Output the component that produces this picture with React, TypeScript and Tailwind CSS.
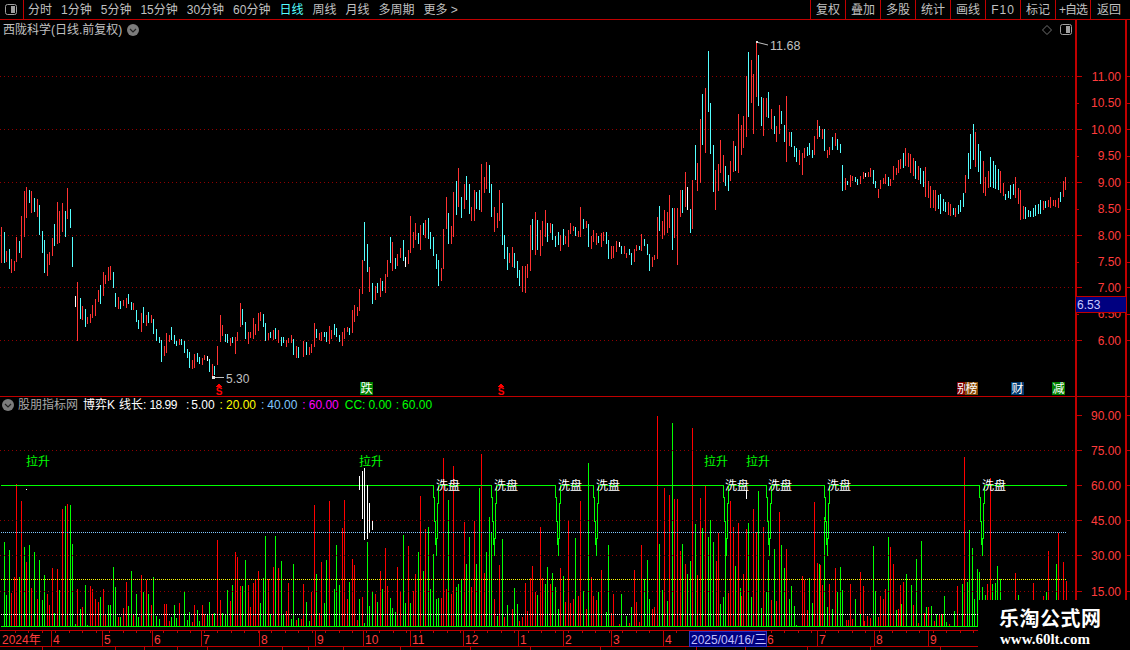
const FONT = "font-['Liberation_Sans','Noto_Sans_CJK_SC',sans-serif]";

const RED = "#ff3232";
const CYAN = "#54ffff";
const GREEN = "#00ff00";
const LINE_RED = "#c00000";
const GRID_RED = "#900000";

// candle tables, read off the chart: x + colour + top-bottom, in 1/3 px
const CANDLES_A = `3r171-278 12c186-278 18r243-275 27c237-297 33r267-308 42r273-303 48r201-275 57c213-248 63r138-264 72r63-201 78r51-144 87c60-99 93r63-129 102c84-126 111r87-141 117c105-195 126c183-249 132c210-309 141r252-318 148r246-285 157r204-258 163c162-228 172r96-222 178r123-219 187r99-186 196c123-201 202r54-147 211c117-174 217c201-291 226w378-411 232r336-513 241c384-447 247r408-450 256c417-471 262r441-462 271r432-459 277r405-444 286r387-438 295r360-396 301c345-402 310r306-378 316r315-342 325r291-333 331r288-330 340c306-354 346c369-411 355r381-417 361c393-417 370r390-408 379r384-414 385c372-402 394c396-420 400r399-421 409c420-456 415c450-477 424r429-486 430c411-459 439r435-468 445c426-459 454r435-459 460c447-492 469c477-513 478c501-519 484c510-576 493r528-558 499r489-549 508r495-516 514c471-510 523c495-522 529c513-528 538r507-525 544c507-525 553c513-549 562c537-564 568c546-594 577r570-597 583r552-594 592c549-576 598c561-582 607r564-585 613r555-570 622w558-573 628c567-606 637r582-624 643c588-615 652r528-585 661r435-516 667r465-498 676c492-516 682c492-519 691r504-528 697c501-519 706r501-552 712r486-513`;

const CANDLES_B = `0r460-530 7c477-525 16c517-567 25r545-582 31r545-565 40r505-567 46r522-555 55r490-543 61r487-513 70c492-530 76c520-573 85r550-570 91c545-565 100r540-570 106c535-567 115r540-580 124c562-587 130c562-580 139r570-590 145r565-580 154r555-580 160c567-615 169r588-625 175c592-625 190r573-620 199c577-615 208r590-615 214r582-610 223r520-590 229c537-565 238r550-570 244r545-572 253c545-562 259c547-577 268r528-582 274r540-567 283c522-555 289c535-562 298c555-577 307r545-587 313r533-567 322r531-547 328c534-555 337r480-550 343r465-516 352r470-498 358r417-483 367r330-432 373c216-332 382c282-366 388r351-426 397c400-462 406r408-450 412c400-430 421r383-441 427c393-423 436r372-430 442r330-380 451c261-340 457r276-363 466c325-357 472r312-348 481r294-325 490c270-332 496w320-352 505r300-342 511r197-310 520r245-293 526r220-270 535c250-282 541r225-300 550c220-255 556r210-265 565c205-267 571c247-297 580c262-318 589c312-357 595c330-408 604r355-393 610r237-357 619r140-237 625c190-282 634r228-282 640r126-260 649c94-195 655r55-170 664c142-204 673r102-177 679c78-150 688c102-192 694r170-212 703r120-212 709c126-177 718c120-180 724r42-186 733r82-130 739r37-118 748c45-130 754c102-201 763r170-246 772r190-235 778r121-212 787c159-285 793c255-327 802c292-360 808r310-340 817r292-352 823c310-355 832c333-384 838c360-408 847r348-426 856r348-429 862r342-384 871r225-363 877c207-300 886r186-315 892c210-300 901r240-318 907r213-288 916r180-262 922c219-276 931r219-250 937c222-270 946c258-291 955c246-285 961r255-303 970c237-285 976r258-282 985r240-291 991r219-252 1000r228-243 1006c231-258 1015r243-261 1021r171-261 1030c207-237 1039r213-234 1045c222-291 1054r258-297 1060r240-276 1069r249-285 1075c258-279 1084r249-291 1090r246-273 1099c246-282 1105c270-327 1114r288-327 1120r288-324 1129r273-306 1138w276-291 1144c288-312 1153r288-312 1159r309-324 1168c297-315 1174c309-345 1183r297-336 1189r285-303 1198c288-300 1204r252-303 1213c267-288 1222c282-315 1228c312-363 1237r321-351 1243r315-330 1252r201-327 1258c168-243`;

const CANDLES_C = `67r543-597 73r510-585 82r515-580 88r465-565 97c505-630 103r505-595 112r505-675 121r450-530 127c450-520 136r395-500 142w440-510 151c507-578 157r420-567 166c315-420 172r368-453 181r237-430 187c162-315 196r145-340 205c33-215 211c190-342 220c315-457 226r390-510 235r372-453 241r300-400 250r345-425 256c378-438 265c405-453 271r362-423 280r303-395 286c318-393 295r222-400 304r255-345 310r228-325 319r108-290 325c36-232 334r60-190 340r102-282 349r8-172 355c45-198 364c170-258 370r174-288 379r174-232 385c156-235 394r207-268 403c228-283 409r258-306 418r195-282 424c213-252 433c255-306 439r168-366 448r276-318 454c276-321 463c318-352 469c324-366 478r330-375 487r339-405 493r324-354 502c321-348 508c309-345 517c330-354 523r288-345 532r240-297 538c258-291 547r267-297 553c267-333 562r330-354 568r321-345 577c291-330 586r279-318 592c297-330 601c312-339 607c375-453 616r414-450 622c423-435 631r405-441 637r408-423 646c411-426 652c417-435 661r408-432 670r396-417 676w399-411 685r396-411 691r384-411 700c390-432 706c423-444 715r447-474 721r420-447 730r414-432 736r402-432 745c411-438 751r417-438 760r378-420 769r384-405 775r360-399`;

// right end of the price chart: x, top, bottom
const TAIL: [number, number, number][] = [
  [900, 152, 176], [905, 146, 168], [915, 160, 180], [925, 166, 198], [930, 186, 208], [945, 200, 214],
  [955, 206, 219], [962, 192, 214], [966, 160, 195], [968, 136, 188], [972, 113, 168], [976, 135, 170], [980, 150, 185],
  [985, 175, 198], [990, 156, 188], [1000, 170, 194], [1005, 190, 204], [1015, 172, 203],
  [1022, 205, 219], [1030, 208, 220], [1040, 200, 214], [1050, 196, 209], [1058, 195, 212],
  [1062, 176, 204], [1066, 173, 190],
];

type Candle = { x: number; c: string; top: number; bot: number };

function parseCandles(src: string, bx: number, by: number): Candle[] {
  return src.split(/\s+/).map((t) => {
    const m = t.match(/^(\d+)([rcw])(\d+)-(\d+)$/)!;
    return { x: Math.round(bx + +m[1] / 3), c: m[2], top: Math.round(by + +m[3] / 3), bot: Math.round(by + +m[4] / 3) };
  });
}

function tailCandles(): Candle[] {
  const out: Candle[] = [];
  let seed = 7;
  const rnd = () => {
    seed = (seed * 16807) % 2147483647;
    return seed / 2147483647;
  };
  for (let x = 900; x < 1067; x += 2.5) {
    const i = Math.max(0, TAIL.findIndex((p) => p[0] > x) - 1);
    const a = TAIL[i];
    const b = TAIL[Math.min(i + 1, TAIL.length - 1)];
    const t = b[0] === a[0] ? 0 : (x - a[0]) / (b[0] - a[0]);
    const mid = (a[1] + (b[1] - a[1]) * t + a[2] + (b[2] - a[2]) * t) / 2;
    const half = ((a[2] - a[1]) / 2) * (0.45 + rnd() * 0.55);
    out.push({ x: Math.round(x), c: rnd() > 0.5 ? "r" : "c", top: Math.round(mid - half), bot: Math.round(mid + half) });
  }
  return out;
}

const ALL_CANDLES = [
  ...parseCandles(CANDLES_A, 0, 170),
  ...parseCandles(CANDLES_B, 240, 150),
  ...parseCandles(CANDLES_C, 640, 40),
  ...tailCandles(),
];

function candlePath(c: string) {
  return ALL_CANDLES.filter((k) => k.c === c)
    .map((k) => `M${k.x + 0.5} ${k.top}V${k.bot}`)
    .join("");
}

// indicator bars: x,top pairs in 1/3 px
const BARS: { bx: number; green: string; red: string }[] = [
  {
    bx: 0,
    green: "13,411 19,570 28,435 58,516 73,426 88,420 103,441 118,465 127,585 133,510 163,625 178,555 196,303 211,300 217,417 226,657 241,612 256,540 262,660 301,575 325,600 331,600 340,486 346,546 361,636 385,603 394,498 409,567 415,636 430,561 445,567 460,516 469,633 478,642 514,636 523,600 529,639 553,558 562,645 568,621 598,648 592,615 622,627 628,591 643,624 667,624 676,627 682,555 697,540 727,543 736,465 781,594 790,519 796,393 811,627 826,393 844,468 850,627 874,642 880,477 895,639 919,591 928,648 949,507 973,594 979,465 1003,552 1009,420 1018,540 1048,531",
    red: "34,564 43,516 49,237 64,288 79,471 94,549 112,582 142,567 148,600 157,489 172,492 187,312 202,297 232,552 247,606 271,543 277,552 286,582 295,591 310,552 316,627 355,636 370,609 379,531 400,627 424,510 439,525 454,600 493,597 499,597 508,648 538,594 577,651 583,600 607,600 613,627 637,627 652,405 661,585 691,588 706,441 712,456 721,543 745,540 751,606 760,534 766,525 775,498 805,522 820,486 835,489 859,618 865,534 889,645 904,642 910,537 934,561 943,300 958,624 964,471 988,288 1027,369 1033,285 1042,582 1057,462 1063,480",
  },
  {
    bx: 355,
    green: "13,582 28,654 37,411 43,603 52,558 67,591 82,552 106,579 112,609 121,621 145,390 151,594 166,594 190,441 205,498 220,366 226,552 235,447 244,582 250,579 280,285 304,546 310,537 319,522 334,477 343,396 364,477 373,249 394,441 403,336 409,381 427,633 442,402 457,600 478,549 487,597 547,570 571,537 577,486 592,504 601,546 610,612 625,513 661,399 685,558 700,174 730,561 754,621 760,420 799,567 814,633 829,606 868,522 877,465 883,582 913,417 922,555 937,588 952,54 997,507 982,417 1006,468 1021,357 1042,369 1060,396 1066,345",
    red: "7,645 22,576 61,567 76,498 91,429 97,543 127,486 136,561 160,423 175,558 181,507 196,273 211,372 259,579 265,159 274,552 289,567 295,183 328,351 349,546 358,348 379,147 388,504 418,582 433,480 448,636 472,612 493,648 502,636 511,534 517,618 526,519 532,483 541,561 556,366 562,519 586,537 616,489 631,591 640,348 646,594 655,582 670,573 676,288 694,612 709,516 715,573 724,585 739,495 769,624 775,567 793,657 823,654 838,495 844,591 853,651 859,420 892,612 898,606 907,33 928,249 943,270 958,282 967,282 976,438 991,477 1012,69 1027,510 1036,279 1051,243",
  },
  {
    bx: 710,
    green: "1,345 10,411 31,597 40,576 46,368 76,483 91,550 115,354 124,576 145,258 154,609 169,561 175,465 193,432 214,420 223,489 238,582 244,543 253,603 259,660 298,519 307,594 328,477 343,336 352,606 367,612 382,561 391,486 397,555 436,582 451,627 490,423 496,558 535,396 559,615 574,597 589,507 604,540 619,462 634,408 649,606 664,603 679,627 694,627 703,573 709,651 733,618 757,537 772,531 778,375 787,429 793,582 802,492 808,501 817,546 826,570 847,537 856,534 862,483 871,522 925,570 1009,561 1039,477",
    red: "19,468 25,384 55,564 61,288 70,366 85,354 94,573 100,507 109,372 130,312 139,381 160,366 184,585 199,588 208,321 229,432 277,513 283,525 292,615 313,291 322,474 331,480 337,540 358,537 376,489 409,645 415,645 421,537 427,642 451,501 460,543 463,648 472,633 481,639 505,636 511,573 520,582 526,552 541,426 550,477 565,612 571,540 580,531 610,600 625,654 643,624 655,606 673,648 688,627 697,627 718,657 742,543 763,156 832,537 841,219 916,504 970,534 1000,573 1015,438 1045,384 1060,471 1069,528",
  },
];

function barPath(key: "green" | "red") {
  return BARS.map((s) =>
    s[key]
      .split(" ")
      .map((p) => {
        const [zx, zy] = p.split(",").map(Number);
        return `M${Math.round(s.bx + zx / 3) + 0.5} ${Math.round(405 + zy / 3)}V626`;
      })
      .join("")
  ).join("");
}

// 洗盘 staircase dips on the 60 line
const DIPS = [433, 491, 555, 593, 723, 766, 824, 979];
function stairLine() {
  let d = "M1 485.5";
  for (const x of DIPS) {
    d += `H${x + 0.5}V497.5H${x + 1.5}V521.5H${x + 2.5}V544.5H${x + 3.5}V556V538.5H${x + 4.5}V503.5H${x + 5.5}V485.5`;
  }
  return d + "H1067";
}

const WHITE_BARS: [number, number, number][] = [
  [359, 476, 490], [362, 471, 519], [364, 468, 540], [367, 485, 539], [369, 503, 533], [372, 521, 530], [746, 490, 499],
];

const PRICE_LABELS: [string, number, boolean][] = [
  ["11.00", 76.5, true], ["10.50", 103, false], ["10.00", 129.5, true], ["9.50", 156, false], ["9.00", 182.5, true],
  ["8.50", 209, false], ["8.00", 235.5, true], ["7.50", 262, false], ["7.00", 287.5, true], ["6.50", 314, false], ["6.00", 340.5, true],
];
const IND_LABELS: [string, number][] = [["90.00", 415.5], ["75.00", 450.5], ["60.00", 485.5], ["45.00", 520.5], ["30.00", 555.5], ["15.00", 591.5]];

const TABS = ["分时", "1分钟", "5分钟", "15分钟", "30分钟", "60分钟", "日线", "周线", "月线", "多周期", "更多 >"];
const ACTIONS = ["复权", "叠加", "多股", "统计", "画线", "F10", "标记", "+自选", "返回"];

const DATE_TICKS: [string, number][] = [
  ["4", 51], ["5", 102], ["6", 152], ["7", 201], ["8", 259], ["9", 315], ["10", 363], ["11", 410], ["12", 463],
  ["1", 518], ["2", 563], ["3", 611], ["4", 663], ["6", 765], ["7", 817], ["8", 874], ["9", 928],
];
const LOWER_TICKS = [42, 115, 144, 177, 207, 282, 308, 343, 400, 470, 530, 600, 696, 745, 807, 870, 940];

function ToggleIcon() {
  return (
    <svg width="12" height="11" viewBox="0 0 12 11" className="block">
      <rect x="0.5" y="0.5" width="11" height="10" rx="2" fill="#000" stroke="#a0a0a0" />
      <rect x="6" y="2" width="4" height="7" fill="#a0a0a0" />
    </svg>
  );
}

function CircleIcon() {
  return (
    <svg width="12" height="12" viewBox="0 0 12 12" className="block">
      <circle cx="6" cy="6" r="6" fill="#7c7c7c" />
      <path d="M3 5l3 3 3-3" fill="none" stroke="#222" strokeWidth="1.2" />
    </svg>
  );
}

function Badge({ x, w, fill, label }: { x: number; w: number; fill: string; label: string }) {
  return (
    <g>
      <rect x={x} y={382} width={w} height={13} fill={fill} />
      <text x={x + w / 2} y={393} textAnchor="middle" fontSize="12" fill="#fff">
        {label}
      </text>
    </g>
  );
}

function Dollar({ x }: { x: number }) {
  return (
    <g>
      <path d={`M${x} 383.5l3.5 3.5h-7z`} fill="#ff0000" />
      <text x={x} y={395} textAnchor="middle" fontSize="10" fontWeight="700" fill="#ff0000">
        S
      </text>
    </g>
  );
}

function PriceChart() {
  return (
    <svg width="1075" height="376" viewBox="0 20 1075 376" className="block" shapeRendering="crispEdges">
      {[76.5, 129.5, 182.5, 235.5, 287.5, 340.5].map((y) => (
        <line key={y} x1="0" x2="1075" y1={y} y2={y} stroke={GRID_RED} strokeDasharray="1 3" />
      ))}
      <path d={candlePath("r")} stroke={RED} fill="none" />
      <path d={candlePath("c")} stroke={CYAN} fill="none" />
      <path d={candlePath("w")} stroke="#ffffff" fill="none" />

      <path d="M756 42L768 45" stroke="#c0c0c0" shapeRendering="auto" fill="none" />
      <path d="M756 41h2v2h-2z" fill="#e0e0e0" />
      <text x="770" y="50" fontSize="12.5" fill="#c0c0c0">
        11.68
      </text>
      <path d="M213 377.5H224" stroke="#c0c0c0" fill="none" />
      <path d="M212 376h3v3h-3z" fill="#e0e0e0" />
      <text x="226" y="383" fontSize="12" fill="#c0c0c0">
        5.30
      </text>

      <Dollar x={219} />
      <Dollar x={501} />
      <Badge x={360} w={13} fill="#008000" label="跌" />
      <rect x="957" y="382" width="9" height="13" fill="#800000" />
      <text x="957" y="393" fontSize="12" fill="#fff">
        别
      </text>
      <Badge x={965} w={13} fill="#8a4b08" label="榜" />
      <Badge x={1011} w={13} fill="#003a70" label="财" />
      <Badge x={1052} w={13} fill="#008000" label="减" />
    </svg>
  );
}

function PriceAxis() {
  return (
    <svg width="55" height="376" viewBox="1075 20 55 376" className="block" shapeRendering="crispEdges">
      <path d="M1076 20V396" stroke={LINE_RED} strokeWidth="2" fill="none" />
      <path d="M1126 20V396" stroke={LINE_RED} strokeWidth="2" fill="none" />
      {PRICE_LABELS.map(([label, y, major]) => (
        <g key={label}>
          <line x1="1077" x2={major ? 1082 : 1079} y1={y} y2={y} stroke={LINE_RED} />
          <line x1="1127" x2="1130" y1={y} y2={y} stroke={LINE_RED} />
          <text x="1121" y={y + 4} textAnchor="end" fontSize="12" fill="#ff3c3c">
            {label}
          </text>
        </g>
      ))}
    </svg>
  );
}

function IndicatorChart() {
  return (
    <svg width="1075" height="233" viewBox="0 397 1075 233" className="block" shapeRendering="crispEdges">
      <path d={barPath("red")} stroke="#ff0000" fill="none" />
      <path d={barPath("green")} stroke={GREEN} fill="none" />
      {[450.5, 520.5, 555.5, 591.5].map((y) => (
        <line key={y} x1="0" x2="1075" y1={y} y2={y} stroke={GRID_RED} strokeDasharray="1 3" />
      ))}
      <line x1="1" x2="1067" y1="532.5" y2="532.5" stroke="#80c8ff" strokeDasharray="1 1" />
      <line x1="1" x2="1067" y1="579.5" y2="579.5" stroke="#ffff00" strokeDasharray="1 1" />
      <line x1="1" x2="1067" y1="614.5" y2="614.5" stroke="#ffffff" strokeDasharray="1 1" />
      <line x1="1" x2="1067" y1="626.5" y2="626.5" stroke={GREEN} />
      <path d={stairLine()} stroke={GREEN} fill="none" />
      <path d={WHITE_BARS.map(([x, a, b]) => `M${x + 0.5} ${a}V${b}`).join("")} stroke="#ffffff" fill="none" />
      <rect x="26" y="489" width="1" height="1" fill="#fff" />
      {[26, 359, 704, 746].map((x) => (
        <text key={x} x={x} y="466" fontSize="12" fill={GREEN}>
          拉升
        </text>
      ))}
      {[436, 494, 558, 596, 725, 768, 827, 982].map((x) => (
        <text key={x} x={x} y="490" fontSize="12" fill="#ffffff">
          洗盘
        </text>
      ))}
    </svg>
  );
}

function IndicatorAxis() {
  return (
    <svg width="55" height="233" viewBox="1075 397 55 233" className="block" shapeRendering="crispEdges">
      <path d="M1076 397V630" stroke={LINE_RED} strokeWidth="2" fill="none" />
      <path d="M1126 397V630" stroke={LINE_RED} strokeWidth="2" fill="none" />
      {IND_LABELS.map(([label, y]) => (
        <g key={label}>
          <line x1="1077" x2="1082" y1={y} y2={y} stroke={LINE_RED} />
          <line x1="1127" x2="1130" y1={y} y2={y} stroke={LINE_RED} />
          <text x="1121" y={y + 4} textAnchor="end" fontSize="12" fill="#ff3c3c">
            {label}
          </text>
        </g>
      ))}
    </svg>
  );
}

function DateAxis() {
  return (
    <svg width="1130" height="20" viewBox="0 630 1130 20" className="block" shapeRendering="crispEdges">
      <line x1="0" x2="1130" y1="630.5" y2="630.5" stroke={LINE_RED} />
      <line x1="0" x2="1130" y1="646.5" y2="646.5" stroke={LINE_RED} />
      {Array.from({ length: 72 }, (_, i) => (
        <line key={i} x1={15 + i * 13.5} x2={15 + i * 13.5} y1="631" y2="633" stroke={LINE_RED} />
      ))}
      {LOWER_TICKS.map((x) => (
        <line key={x} x1={x} x2={x} y1="647" y2="650" stroke={LINE_RED} />
      ))}
      <text x="2" y="644" fontSize="12" fill="#ff3c3c">
        2024年
      </text>
      {DATE_TICKS.map(([label, x]) => (
        <g key={x}>
          <line x1={x + 0.5} x2={x + 0.5} y1="631" y2="646" stroke={LINE_RED} />
          <text x={x + 2} y="644" fontSize="12" fill="#ff3c3c">
            {label}
          </text>
        </g>
      ))}
      <rect x="689.5" y="631.5" width="77" height="15" fill="#000080" stroke="#3030c0" />
      <text x="691" y="644" fontSize="12" fill="#c0c0ff">
        2025/04/16/三
      </text>
    </svg>
  );
}

export default function App() {
  return (
    <div className={`relative w-[1130px] h-[650px] overflow-hidden bg-black text-[12px] leading-none text-[#c0c0c0] ${FONT}`}>
      {/* toolbar */}
      <div className="flex h-[20px] items-stretch border-b border-[#c00000]">
        <div className="flex w-[24px] items-center pl-[5px] border-r border-[#c00000]">
          <ToggleIcon />
        </div>
        <div className="flex flex-1 items-center gap-[9px] pl-[4px]">
          {TABS.map((t) => (
            <span key={t} className={t === "日线" ? "text-[#54ffff]" : ""}>
              {t}
            </span>
          ))}
        </div>
        <div className="flex">
          {ACTIONS.map((a, i) => (
            <div
              key={a}
              className={`flex items-center border-l border-[#c00000] ${
                i === ACTIONS.length - 1 ? "w-[40px] pl-[6px]" : "w-[35px] justify-center"
              } ${a === "F10" ? "tracking-[1px]" : ""} ${a === "+自选" ? "tracking-[-1px] whitespace-nowrap" : ""}`}
            >
              {a}
            </div>
          ))}
        </div>
      </div>

      {/* price panel */}
      <div className="flex h-[377px] border-b border-[#c00000]">
        <div className="relative w-[1075px]">
          <PriceChart />
          <div className="absolute left-[3px] top-[4px] flex items-center gap-[5px]">
            <span className="whitespace-nowrap">西陇科学(日线.前复权)</span>
            <CircleIcon />
          </div>
          <div className="absolute right-[3px] top-[4px] flex items-center gap-[8px]">
            <svg width="10" height="10" viewBox="0 0 10 10" className="block">
              <path d="M5 .5L9.5 5 5 9.5 .5 5z" fill="none" stroke="#707070" />
            </svg>
            <ToggleIcon />
          </div>
        </div>
        <div className="relative w-[55px]">
          <PriceAxis />
          <div className="absolute left-0 top-[276px] flex h-[17px] w-[52px] items-center border border-[#c00000] bg-[#000080] pl-[1px] text-[#c8c8ff]">
            6.53
          </div>
        </div>
      </div>

      {/* indicator panel */}
      <div className="flex h-[233px]">
        <div className="relative w-[1075px]">
          <IndicatorChart />
          <div className="absolute left-[2px] top-[2px] flex items-center whitespace-nowrap text-[#a8a8a8]">
            <CircleIcon />
            <span className="ml-[4px]">股朋指标网</span>
            <span className="ml-[5px] text-white">博弈K</span>
            <span className="ml-[4px] text-white">线长:</span>
            <div className="ml-[3px] flex text-white">
              <span className="tracking-[-0.5px]">18.99</span>
              <span className="ml-[9px]">:</span>
              <span className="ml-[2px]">5.00</span>
              <span className="ml-[5px] text-[#ffff00]">:</span>
              <span className="ml-[3px] text-[#ffff00]">20.00</span>
              <span className="ml-[5px] text-[#80c8ff]">:</span>
              <span className="ml-[3px] text-[#80c8ff]">40.00</span>
              <span className="ml-[5px] text-[#ff00ff]">:</span>
              <span className="ml-[3px] text-[#ff00ff]">60.00</span>
              <span className="ml-[6px] text-[#00ff00]">CC:</span>
              <span className="ml-[3px] text-[#00ff00]">0.00</span>
              <span className="ml-[4px] text-[#00ff00]">:</span>
              <span className="ml-[3px] text-[#00ff00]">60.00</span>
            </div>
          </div>
        </div>
        <IndicatorAxis />
      </div>

      <DateAxis />

      {/* site watermark */}
      <div className="absolute bottom-0 right-0 flex h-[50px] w-[152px] flex-col bg-black pl-[21px] pt-[8px] font-bold text-white">
        <span className="text-[20px] leading-[22px] tracking-[0.5px]">乐淘公式网</span>
        <span className="mt-[2px] pl-[1px] font-['Liberation_Serif',serif] text-[15px] leading-[15px]">www.60lt.com</span>
      </div>
    </div>
  );
}
